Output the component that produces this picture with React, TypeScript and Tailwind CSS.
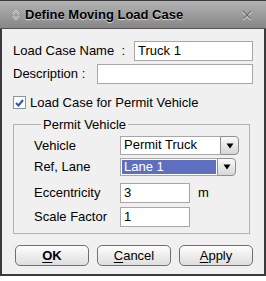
import React from "react";

const FONT = "font-['Liberation_Sans',Arial,sans-serif]";

function TitleIcon() {
  return (
    <svg width="8" height="10" viewBox="0 0 8 10" className="shrink-0">
      <path d="M1 4 L4 1 L7 4" fill="none" stroke="#f2f2f2" strokeWidth="1.6" />
      <path d="M1 6 L4 9 L7 6" fill="none" stroke="#f2f2f2" strokeWidth="1.6" />
      <path d="M1 4 L4 1 L7 4" fill="none" stroke="#6a6a6a" strokeWidth="0.6" />
      <path d="M1 6 L4 9 L7 6" fill="none" stroke="#6a6a6a" strokeWidth="0.6" />
    </svg>
  );
}

function CloseIcon() {
  return (
    <svg width="10" height="10" viewBox="0 0 10 10">
      <path d="M1 1 L9 9 M9 1 L1 9" stroke="#e6e6e6" strokeWidth="2.2" transform="translate(0 0.6)" />
      <path d="M1 1 L9 9 M9 1 L1 9" stroke="#6e6e6e" strokeWidth="1.6" />
    </svg>
  );
}

function TextBox({ value, className }: { value?: string; className: string }) {
  return (
    <div
      className={`h-[20px] border border-[#a7a7a7] bg-white pl-[3px] text-[13px] leading-[17px] text-black ${className}`}
    >
      {value}
    </div>
  );
}

function DropButton() {
  return (
    <div className="flex w-[19px] shrink-0 items-center justify-center rounded-r-[4px] border border-[#8f8f8f] bg-gradient-to-b from-[#fafafa] to-[#d6d6d6]">
      <svg width="8" height="6" viewBox="0 0 8 6">
        <path d="M0.5 0.5 H7.5 L4 5.5 Z" fill="#000" />
      </svg>
    </div>
  );
}

export default function App() {
  return (
    <div className={`h-[281px] w-[266px] bg-white ${FONT}`}>
      <div className="flex h-[276px] w-[266px] flex-col border-2 border-t-0 border-[#3a3a3a]">
        {/* Title bar */}
        <div className="-mx-[2px] flex h-[29px] shrink-0 items-center border-t border-b border-t-[#3a3a3a] border-b-[#555] bg-gradient-to-b from-[#b3b3b3] to-[#878787] pl-[12px] pr-[14px]">
          <TitleIcon />
          <span className="ml-[5px] text-[13px] font-bold text-black [text-shadow:0_1px_1px_#dcdcdc]">
            Define Moving Load Case
          </span>
          <span className="ml-auto flex">
            <CloseIcon />
          </span>
        </div>

        {/* Body */}
        <div className="flex flex-1 flex-col bg-[#f0f0f0] pl-[11px] pr-[10px] text-[13px] text-black">
          <div className="mt-[12px] flex h-[20px] items-center">
            <span className="w-[121px] whitespace-pre">Load Case Name  :</span>
            <TextBox value="Truck 1" className="w-[119px]" />
          </div>
          <div className="mt-[3px] flex h-[20px] items-center">
            <span className="w-[84px] whitespace-pre">Description :</span>
            <TextBox className="w-[156px]" />
          </div>

          <div className="mt-[12px] flex h-[13px] items-center">
            <span className="flex h-[13px] w-[13px] items-center justify-center border border-[#8797ab] bg-white">
              <svg width="9" height="8" viewBox="0 0 9 8">
                <path d="M1 4 L3.5 6.5 L8 1" fill="none" stroke="#2d55b8" strokeWidth="2" />
              </svg>
            </span>
            <span className="ml-[4px]">Load Case for Permit Vehicle</span>
          </div>

          <fieldset className="mt-[8px] w-[237px] border border-[#b2b2b2] pb-[6px] pl-[20px]">
            <legend className="ml-[7px] px-[2px] leading-[15px]">Permit Vehicle</legend>
            <div className="mt-[4px] flex h-[19px] items-center">
              <span className="w-[86px]">Vehicle</span>
              <div className="flex h-[19px] w-[119px]">
                <div className="flex-1 border border-r-0 border-[#a7a7a7] bg-white pl-[3px] leading-[16px]">
                  Permit Truck
                </div>
                <DropButton />
              </div>
            </div>
            <div className="mt-[3px] flex h-[18px] items-center">
              <span className="w-[86px] whitespace-pre">Ref, Lane</span>
              <div className="flex h-[18px] w-[116px]">
                <div className="flex-1 border border-r-0 border-[#a7a7a7] bg-white p-[1px]">
                  <div className="h-full bg-[#5f6fbf] pl-[2px] leading-[14px] text-white">Lane 1</div>
                </div>
                <DropButton />
              </div>
            </div>
            <div className="mt-[7px] flex h-[20px] items-center">
              <span className="w-[86px]">Eccentricity</span>
              <TextBox value="3" className="w-[70px]" />
              <span className="ml-[8px]">m</span>
            </div>
            <div className="mt-[4px] flex h-[20px] items-center">
              <span className="w-[86px]">Scale Factor</span>
              <TextBox value="1" className="w-[70px]" />
            </div>
          </fieldset>

          <div className="mt-[11px] flex h-[21px] gap-[8px] pl-[2px]">
            {[
              { k: "O", rest: "K", bold: true },
              { k: "C", rest: "ancel", bold: false },
              { k: "A", rest: "pply", bold: false },
            ].map((b) => (
              <button
                key={b.k}
                className={`flex h-[21px] w-[74px] items-center justify-center rounded-[5px] border border-[#707070] bg-gradient-to-b from-[#fdfdfd] to-[#dedede] text-[13px] ${
                  b.bold ? "font-bold" : ""
                }`}
              >
                <span className="underline underline-offset-2">{b.k}</span>
                {b.rest}
              </button>
            ))}
          </div>
        </div>
      </div>
    </div>
  );
}
